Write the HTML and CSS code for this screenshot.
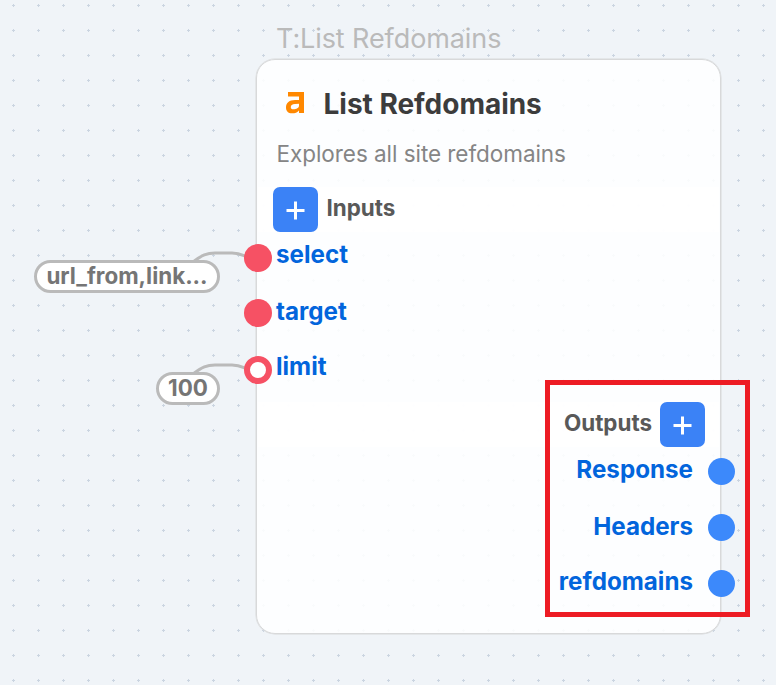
FILE: index.html
```
<!DOCTYPE html>
<html lang="en">
<head>
<meta charset="utf-8">
<title>List Refdomains</title>
<link rel="stylesheet" href="styles.css">
</head>
<body>
<main class="canvas">
  <svg class="links" width="776" height="685" viewBox="0 0 776 685" aria-hidden="true">
    <defs>
      <pattern id="grid" width="25" height="25" patternUnits="userSpaceOnUse">
        <path d="M12 5h3v1h-3zM13 4h1v3h-1z" fill="#cbd5e1"/>
      </pattern>
    </defs>
    <rect width="776" height="685" fill="url(#grid)"/>
    <path d="M193 262C202 255 207 253 215 253H232C240 253 242 255 247 257M193 374C202 367 207 365 215 365H232C240 365 242 367 247 369" fill="none" stroke="#bababa" stroke-width="3"/>
  </svg>
  <div class="chip chip-select"><span>url_from,link...</span></div>
  <div class="chip chip-limit"><span>100</span></div>
  <div class="node-tag"><span>T:List Refdomains</span></div>
  <article class="node">
    <header class="head">
      <svg class="logo" width="19" height="22" viewBox="0 0 19 22" aria-hidden="true">
        <path fill="#ff8800" fill-rule="evenodd" d="M2 0H18V21H13V18.500C11.500 20.500 9 21.300 6 21.300C2 21.300 0 19 0 15.500C0 10.500 3.500 8.300 9 8.100L13 7.900V4.500H2ZM13 11.800L9 12.100C6.200 12.300 4.800 13.300 4.800 15.200C4.800 16.600 5.700 17.200 7.300 17.200C10.500 17.200 13 16 13 13.500Z"/>
      </svg>
      <h1><span>List Refdomains</span></h1>
    </header>
    <p class="desc"><span>Explores all site refdomains</span></p>
    <section class="group">
      <div class="bar"><button class="add" aria-label="Add input"><svg width="19" height="19" viewBox="0 0 19 19"><path d="M9.500 .500V18.500M.500 9.500H18.500" stroke="#fff" stroke-width="3"/></svg></button><h2>Inputs</h2></div>
      <div class="row"><i class="port"></i><b>select</b></div>
      <div class="row row-mid"><i class="port"></i><b>target</b></div>
      <div class="row"><i class="port open"></i><b>limit</b></div>
    </section>
    <section class="group out">
      <div class="bar"><h2>Outputs</h2><button class="add" aria-label="Add output"><svg width="19" height="19" viewBox="0 0 19 19"><path d="M9.500 .500V18.500M.500 9.500H18.500" stroke="#fff" stroke-width="3"/></svg></button></div>
      <div class="row"><b>Response</b><i class="port"></i></div>
      <div class="row row-mid"><b>Headers</b><i class="port"></i></div>
      <div class="row"><b>refdomains</b><i class="port"></i></div>
    </section>
  </article>
  <div class="highlight"></div>
</main>
</body>
</html>
```
FILE: styles.css
```
* { box-sizing: border-box; margin: 0; padding: 0; }
body { font-family: Inter, sans-serif; background: #f0f4f8; }
.canvas { position: relative; width: 776px; height: 685px; overflow: hidden; }
.links { position: absolute; left: 0; top: 0; }
.chip {
  position: absolute; height: 33px; border: 3px solid #bababa; border-radius: 17px;
  background: #fff; color: #757575; font-size: 22.4px; font-weight: 700; line-height: 26px;
  text-align: center; white-space: nowrap;
}
.chip-select { left: 34px; top: 260px; width: 186px; }
.chip-limit { left: 156px; top: 372px; width: 64px; }
.node-tag {
  position: absolute; left: 276px; top: 23px; line-height: 32px;
  font-size: 27px; letter-spacing: -.1px; color: #bababa; white-space: nowrap;
}
.node {
  position: absolute; left: 256px; top: 59px; width: 465px; height: 575px;
  border: 1px solid #d8d9da; border-radius: 19px;
  box-shadow: 0 0 0 .5px #d8d9da; background: rgba(254, 255, 255, .9);
}
.head { display: flex; align-items: center; height: 44px; margin-top: 22px; padding-left: 29px; }
.logo { display: block; margin-top: -2px; }
.head h1 { margin: 0 0 0 18.5px; font-size: 28px; font-weight: 700; letter-spacing: -.02px; line-height: 32px; color: #3c3c3c; white-space: nowrap; }
.desc { margin: 16px 0 23px 19.5px; font-size: 22.5px; line-height: 23px; height: 22px; letter-spacing: -.05px; color: #858585; white-space: nowrap; }
.bar { display: flex; height: 45px; margin: 0 1px; padding-left: 14.5px; background: rgba(255, 255, 255, .8); }
.bar h2 { margin-left: 9px; font-size: 22.4px; font-weight: 700; line-height: 41px; color: #595959; }
.add {
  display: flex; align-items: center; justify-content: center; width: 45px; height: 45px;
  border: 0; border-radius: 7px; background: #3b82f6;
}
.add svg { display: block; margin-top: 2px; }
.row { display: flex; align-items: center; height: 56px; }
.row b { margin: -6px 0 0 4px; font-size: 24.2px; font-weight: 700; line-height: 30px; color: #0265dc; }
.row-mid b { margin-top: -4px; }
.bar + .row { margin-top: -2px; }
.port { flex: none; width: 28px; height: 28px; margin-left: -13px; border-radius: 50%; background: #f65164; }
.group:not(.out) .row-mid .port { margin-top: -2px; }
.port.open { border: 6px solid #f65164; background: #fff; }
.out { margin-top: 4px; }
.out .bar { justify-content: flex-end; padding: 0 14px 0 0; }
.out .bar h2 { margin: 0 8px 0 0; }
.out .bar + .row { margin-top: -3px; }
.out .row { justify-content: flex-end; }
.out .row b { margin: -4px 15px 0 0; }
.out .row-mid b { margin-top: -2px; }
.out .port { width: 27px; height: 27px; margin: -1px -15px 0 0; background: #3c89fb; }
.highlight { position: absolute; left: 545px; top: 380px; width: 205px; height: 237px; border: 5px solid #ed1c24; }
```
